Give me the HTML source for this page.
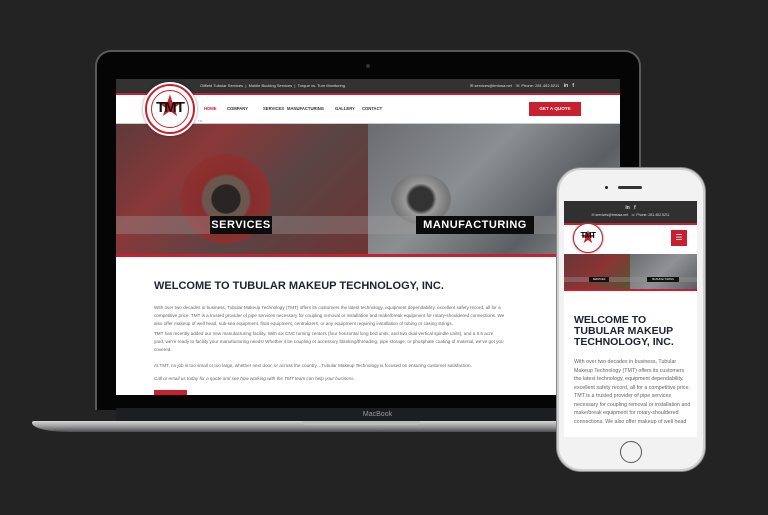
<!DOCTYPE html>
<html><head><meta charset="utf-8"><style>
*{margin:0;padding:0;box-sizing:border-box}
body{width:768px;height:515px;background:#232323;position:relative;overflow:hidden;font-family:"Liberation Sans",sans-serif}
.abs{position:absolute}
.lid{left:95px;top:50px;width:546px;height:360px;background:#050505;border:2px solid #5a5a5c;border-bottom:none;border-radius:16px 16px 0 0}
.scr{left:116px;top:79px;width:504px;height:316px;background:#fff;overflow:hidden}
.bar{left:0;top:0;width:504px;height:14px;background:#323232;color:#ddd;font-size:4px;line-height:14px}
.red{background:#c8202f}
.nav{font-size:4.2px;font-weight:bold;color:#333;top:27px;white-space:nowrap}
.hero{top:45px;height:131px}
.lab{background:#0c0c0c;color:#fff;font-weight:bold;text-align:center;letter-spacing:.5px}
.p{font-size:4.6px;color:#666;line-height:8px;left:38px;width:470px;white-space:nowrap}
</style></head><body>
<div class="abs lid"></div>
<div class="abs" style="left:366px;top:64px;width:4px;height:4px;border-radius:50%;background:#333"></div>
<div class="abs scr">
 <div class="abs bar"><span style="position:absolute;left:84px">Oilfield Tubular Services &nbsp;|&nbsp; Mobile Bucking Services &nbsp;|&nbsp; Torque vs. Turn Monitoring</span><span style="position:absolute;left:354px">✉ services@tmtusa.net &nbsp; ☏ Phone: 281.452.5211 &nbsp;&nbsp; <b style="font-size:5px">in &nbsp; f</b></span></div>
 <div class="abs red" style="left:0;top:14px;width:504px;height:2px"></div>
 <div class="abs" style="left:0;top:44px;width:504px;height:1px;background:#ccc"></div>
 <div class="abs nav" style="left:88px;color:#c8202f">HOME</div>
 <div class="abs nav" style="left:111px">COMPANY</div>
 <div class="abs nav" style="left:147px">SERVICES</div>
 <div class="abs nav" style="left:171px">MANUFACTURING</div>
 <div class="abs nav" style="left:219px">GALLERY</div>
 <div class="abs nav" style="left:246px">CONTACT</div>
 <div class="abs red" style="left:413px;top:23px;width:52px;height:14px;color:#fff;font-size:4.6px;font-weight:bold;text-align:center;line-height:14px">GET A QUOTE</div>
 <div class="abs hero" style="left:0;width:252px;background:linear-gradient(135deg,#5e3a3a 0%,#8a3838 30%,#5a4444 60%,#6e3434 100%)"></div>
 <div class="abs" style="left:65px;top:75px;width:90px;height:90px;border-radius:50%;background:radial-gradient(circle,#222 0 22%,#6b5a50 24% 36%,#8a2b2b 40%,#8e3030 70%);opacity:.9"></div>
 <div class="abs hero" style="left:252px;width:252px;background:linear-gradient(135deg,#6a6c70 0%,#8c8f92 40%,#5b5e62 70%,#9a9c9d 100%)"></div>
 <div class="abs" style="left:275px;top:95px;width:60px;height:50px;border-radius:50%;background:radial-gradient(circle,#333 0 30%,#999 40%,#777 70%)"></div>
 <div class="abs" style="left:0;top:137px;width:504px;height:18px;background:rgba(160,160,160,.35)"></div>
 <div class="abs lab" style="left:94px;top:137px;width:62px;height:18px;font-size:11px;line-height:18px">SERVICES</div>
 <div class="abs lab" style="left:300px;top:137px;width:118px;height:18px;font-size:11px;line-height:18px">MANUFACTURING</div>
 <div class="abs red" style="left:0;top:175px;width:504px;height:3px"></div>
 <div class="abs" style="left:38px;top:201px;font-size:11px;font-weight:bold;color:#1e2232">WELCOME TO TUBULAR MAKEUP TECHNOLOGY, INC.</div>
 <div class="abs p" style="top:225px">With over two decades in business, Tubular Makeup Technology (TMT) offers its customers the latest technology, equipment dependability, excellent safety record, all for a<br>competitive price. TMT is a trusted provider of pipe services necessary for coupling removal or installation and make/break equipment for rotary-shouldered connections. We<br>also offer makeup of well head, sub-sea equipment, float equipment, centralizers, or any equipment requiring installation of tubing or casing strings.</div>
 <div class="abs p" style="top:251px">TMT has recently added our new manufacturing facility. With six CNC turning centers (four horizontal long bed units, and two dual vertical spindle units), and a 6.5 acre<br>yard, we're ready to facility your manufacturing needs! Whether it be coupling or accessory blanking/threading, pipe storage, or phosphate coating of material, we've got you<br>covered.</div>
 <div class="abs p" style="top:283px">At TMT, no job is too small or too large, whether next door, or across the country…Tubular Makeup Technology is focused on ensuring customer satisfaction.</div>
 <div class="abs p" style="top:296px;font-style:italic">Call or email us today for a quote and see how working with the TMT team can help your business.</div>
 <div class="abs red" style="left:38px;top:311px;width:33px;height:8px"></div>
</div>
<!-- laptop logo -->
<div class="abs" style="left:145px;top:84px;width:50px;height:50px;border-radius:50%;background:#fff;border:2px solid #c8202f;box-shadow:0 0 0 2px #fff,0 0 3px 2px rgba(0,0,0,.4)"></div>
<div class="abs" style="left:151px;top:90px;width:38px;height:38px;border-radius:50%;border:1px solid #c8202f"></div>
<div class="abs" style="left:152px;top:92px;width:36px;font-size:30px;color:#c8202f;text-align:center;line-height:30px">★</div>
<div class="abs" style="left:152px;top:99px;width:36px;font-size:15px;font-weight:bold;color:#111;text-align:center;letter-spacing:-1px">TMT</div>
<div class="abs" style="left:198px;top:119px;font-size:3px;color:#999">TM</div>
<!-- bezel/base -->
<div class="abs" style="left:116px;top:408px;width:523px;height:13px;background:#1d1e21;color:#999;font-size:7px;text-align:center;line-height:13px">MacBook</div>
<div class="abs" style="left:32px;top:421px;width:660px;height:11px;border-radius:2px 2px 40px 40px/2px 2px 10px 10px;background:linear-gradient(#d8d8d8,#9a9a9c 50%,#4c4c4e)"></div>
<div class="abs" style="left:302px;top:421px;width:118px;height:4px;border-radius:0 0 5px 5px;background:#bdbdbd"></div>
<!-- phone -->
<div class="abs" style="left:557px;top:168px;width:148px;height:303px;border-radius:24px;background:#f2f2f2;border:2px solid #cfcfcf;box-shadow:0 0 0 1px #888"></div>
<div class="abs" style="left:605px;top:186px;width:3px;height:3px;border-radius:50%;background:#222"></div>
<div class="abs" style="left:618px;top:186px;width:24px;height:3px;border-radius:2px;background:#333"></div>
<div class="abs" style="left:620px;top:441px;width:22px;height:22px;border-radius:50%;border:1px solid #555"></div>
<div class="abs" style="left:564px;top:201px;width:133px;height:236px;background:#fff;overflow:hidden">
 <div class="abs" style="left:0;top:0;width:133px;height:22px;background:#303030;color:#ddd;text-align:center">
  <div style="font-size:5px;font-weight:bold;line-height:10px;padding-top:2px">in &nbsp; f</div>
  <div style="font-size:3.5px">✉ services@tmtusa.net &nbsp; ☏ Phone: 281.452.5211</div></div>
 <div class="abs red" style="left:0;top:22px;width:133px;height:2px"></div>
 <div class="abs" style="left:9px;top:22px;width:30px;height:30px;border-radius:50%;border:1.5px solid #c8202f;background:#fff;box-shadow:0 0 2px #666"></div>
 <div class="abs" style="left:9px;top:22px;width:30px;font-size:18px;color:#c8202f;text-align:center;line-height:28px">★</div>
 <div class="abs" style="left:9px;top:30px;width:30px;font-size:8px;font-weight:bold;text-align:center;letter-spacing:-.5px">TMT</div>
 <div class="abs red" style="left:107px;top:29px;width:16px;height:16px;color:#fff;font-size:8px;text-align:center;line-height:16px">☰</div>
 <div class="abs" style="left:0;top:53px;width:66px;height:36px;background:linear-gradient(135deg,#6a3636,#8a3434,#553)"></div>
 <div class="abs" style="left:66px;top:53px;width:67px;height:36px;background:linear-gradient(135deg,#6a6c70,#8f9194,#5b5e62)"></div>
 <div class="abs" style="left:0;top:76px;width:133px;height:5px;background:rgba(150,150,150,.4)"></div>
 <div class="abs" style="left:25px;top:76px;width:20px;height:5px;background:#111;color:#fff;font-size:2.5px;text-align:center;line-height:5px">SERVICES</div>
 <div class="abs" style="left:83px;top:76px;width:32px;height:5px;background:#111;color:#fff;font-size:2.5px;text-align:center;line-height:5px">MANUFACTURING</div>
 <div class="abs red" style="left:0;top:88px;width:133px;height:2px"></div>
 <div class="abs" style="left:10px;top:114px;font-size:10.5px;font-weight:bold;color:#1e2232;line-height:11px">WELCOME TO<br>TUBULAR MAKEUP<br>TECHNOLOGY, INC.</div>
 <div class="abs" style="left:10px;top:157px;width:118px;font-size:5.3px;color:#666;line-height:8.5px">With over two decades in business, Tubular Makeup Technology (TMT) offers its customers the latest technology, equipment dependability, excellent safety record, all for a competitive price. TMT is a trusted provider of pipe services necessary for coupling removal or installation and make/break equipment for rotary-shouldered connections. We also offer makeup of well head</div>
</div>
</body></html>
